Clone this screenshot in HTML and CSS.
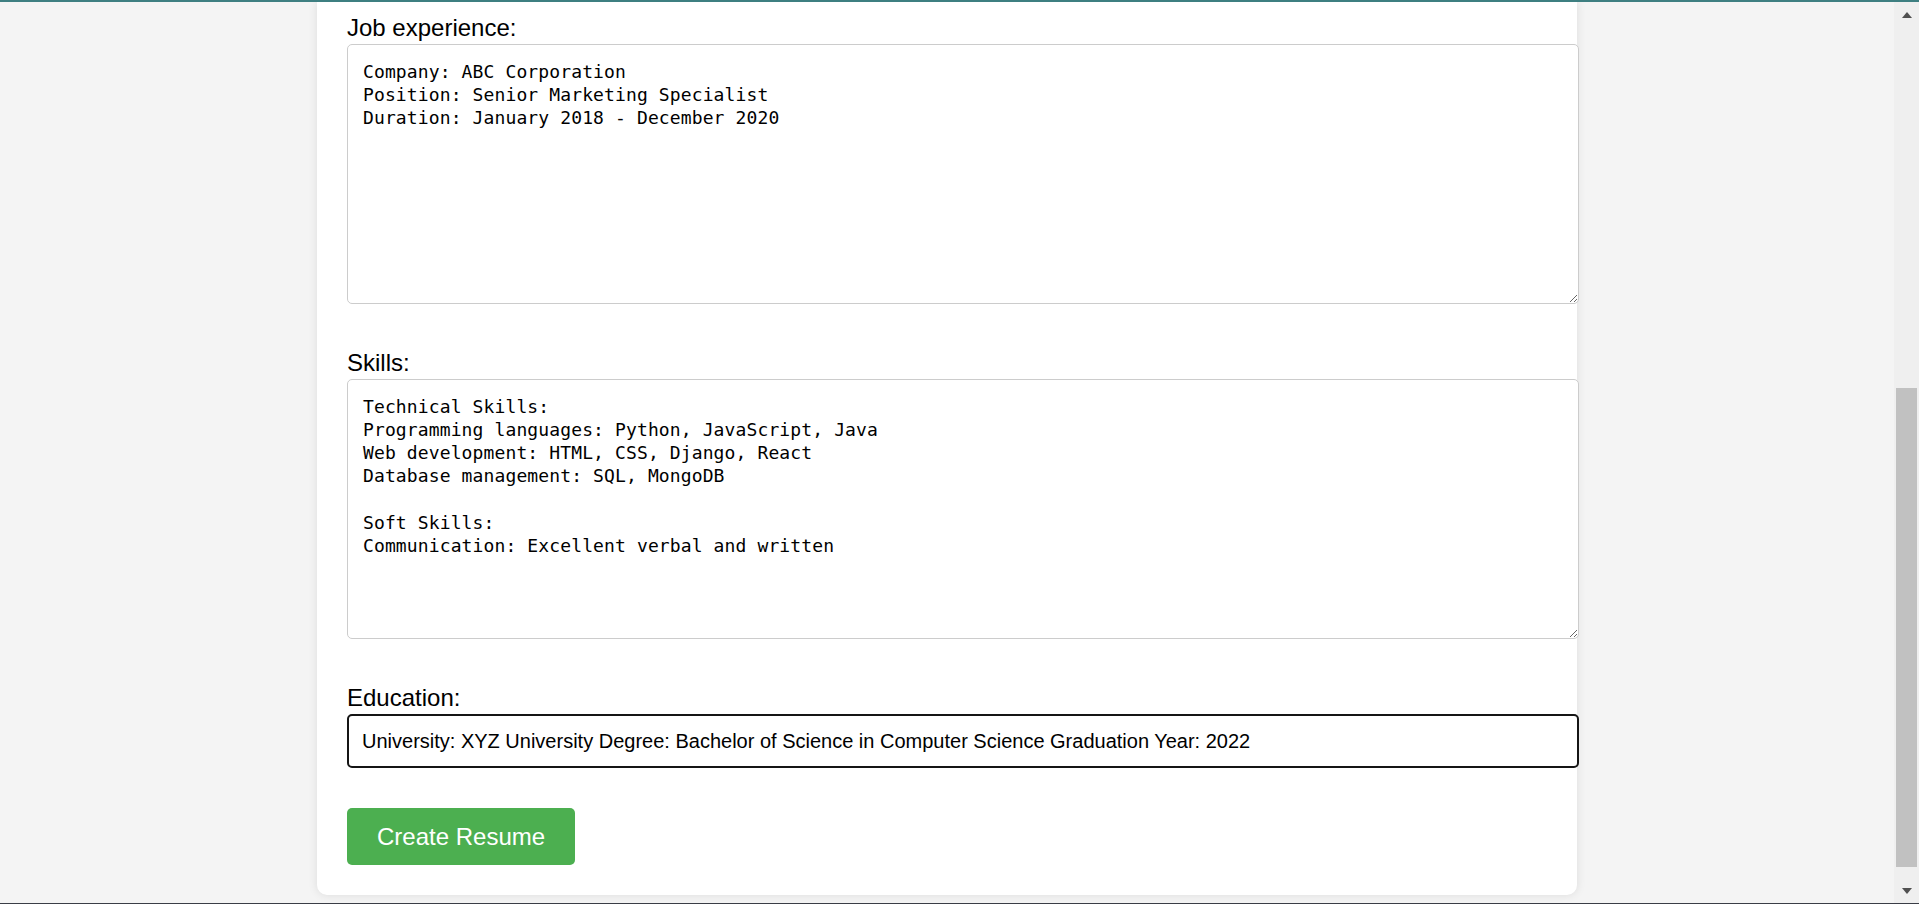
FILE: index.html
```html
<!DOCTYPE html>
<html lang="en">
<head>
<meta charset="utf-8">
<title>Create Resume</title>
<link rel="stylesheet" href="styles.css">
</head>
<body>
<div class="window">
  <div class="frame-top"></div>
  <div class="viewport">
    <main class="page">
      <form class="card">
        <div class="group group-text">
          <label class="label" for="job">Job experience:</label>
          <textarea id="job" class="area" spellcheck="false">Company: ABC Corporation
Position: Senior Marketing Specialist
Duration: January 2018 - December 2020</textarea>
        </div>
        <div class="group group-text">
          <label class="label" for="skills">Skills:</label>
          <textarea id="skills" class="area" spellcheck="false">Technical Skills:
Programming languages: Python, JavaScript, Java
Web development: HTML, CSS, Django, React
Database management: SQL, MongoDB

Soft Skills:
Communication: Excellent verbal and written</textarea>
        </div>
        <div class="group group-input">
          <label class="label" for="edu">Education:</label>
          <input id="edu" class="field" type="text" spellcheck="false" value="University: XYZ University Degree: Bachelor of Science in Computer Science Graduation Year: 2022">
        </div>
        <button type="button" class="submit">Create Resume</button>
      </form>
    </main>
    <div class="scrollbar">
      <div class="sb-btn"><span class="arrow-up"></span></div>
      <div class="sb-track"><div class="sb-thumb"></div></div>
      <div class="sb-btn"><span class="arrow-down"></span></div>
    </div>
  </div>
  <div class="frame-bottom"></div>
</div>
</body>
</html>
```

FILE: styles.css
```css
* {
  margin: 0;
}

html, body {
  height: 100%;
}

body {
  background: #f4f4f4;
  font-family: "Liberation Sans", Arial, sans-serif;
  color: #000;
  overflow: hidden;
}

.window {
  display: flex;
  flex-direction: column;
  height: 904px;
}

.frame-top {
  height: 2px;
  background: #3e7f81;
  flex: none;
}

.frame-bottom {
  height: 1px;
  background: #3a3d46;
  flex: none;
}

.viewport {
  flex: 1;
  display: flex;
  min-height: 0;
}

.page {
  flex: 1;
  overflow: hidden;
  min-width: 0;
}

.card {
  width: 1200px;
  margin: 0 auto;
  padding: 12px 30px 30px;
  background: #fff;
  border-radius: 0 0 10px 10px;
  box-shadow: 0 0 10px rgba(0, 0, 0, 0.1);
}

.group-text {
  margin-bottom: 45.5px;
}

.group-input {
  margin-bottom: 40px;
}

.label {
  display: block;
  font-size: 24px;
  line-height: 27px;
  margin-bottom: 2.5px;
}

.area {
  display: block;
  width: 100%;
  height: 228px;
  padding: 15px;
  border: 1px solid #cccccc;
  border-radius: 5px;
  font-family: "DejaVu Sans Mono", "Liberation Mono", monospace;
  font-size: 18px;
  letter-spacing: 0.12px;
  line-height: 23.3px;
  color: #000;
  background: #fff;
  overflow: hidden;
  outline: none;
}

.field {
  display: block;
  width: 100%;
  height: 22px;
  padding: 14px 15px 14px 13px;
  border: 2px solid #151515;
  border-radius: 5px;
  font-family: "Liberation Sans", Arial, sans-serif;
  font-size: 20px;
  line-height: 22px;
  color: #000;
  background: #fff;
  outline: none;
}

.submit {
  display: block;
  padding: 15px 30px;
  border: none;
  border-radius: 5px;
  background: #4caf50;
  color: #fff;
  font-family: "Liberation Sans", Arial, sans-serif;
  font-size: 24px;
  line-height: 27px;
  cursor: pointer;
}

.scrollbar {
  width: 25px;
  flex: none;
  display: flex;
  flex-direction: column;
  background: #efefef;
}

.sb-btn {
  height: 25px;
  flex: none;
  display: flex;
  align-items: center;
  justify-content: center;
  padding-left: 1px;
}

.arrow-up {
  width: 0;
  height: 0;
  border-left: 5.5px solid transparent;
  border-right: 5.5px solid transparent;
  border-bottom: 6px solid #505050;
}

.arrow-down {
  width: 0;
  height: 0;
  border-left: 5.5px solid transparent;
  border-right: 5.5px solid transparent;
  border-top: 6px solid #505050;
}

.sb-track {
  flex: 1;
  padding: 0 2px 0 2px;
}

.sb-thumb {
  margin-top: 361px;
  height: 479px;
  background: #c1c1c1;
}
```
